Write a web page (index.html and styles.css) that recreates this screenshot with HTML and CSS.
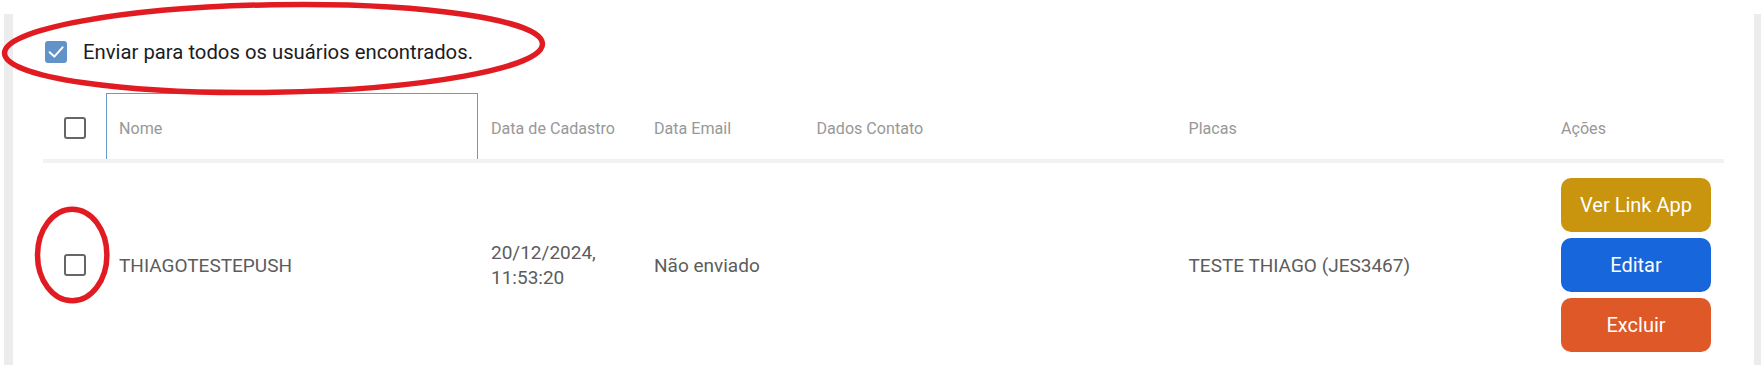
FILE: index.html
```html
<!DOCTYPE html>
<html lang="pt-BR">
<head>
<meta charset="utf-8">
<title>Usuários</title>
<link rel="stylesheet" href="styles.css">
</head>
<body>
<div class="frame">
  <label class="send-all">
    <span class="cb cb-checked"><svg viewBox="0 0 22 22"><path d="M4.6 11.3 L9.3 15.6 L17.6 6.3"/></svg></span>
    <span class="send-all-text">Enviar para todos os usuários encontrados.</span>
  </label>
  <div class="table">
    <div class="thead">
      <div class="th th-check"><span class="cb"></span></div>
      <div class="th th-nome">Nome</div>
      <div class="th">Data de Cadastro</div>
      <div class="th">Data Email</div>
      <div class="th">Dados Contato</div>
      <div class="th">Placas</div>
      <div class="th">Ações</div>
    </div>
    <div class="trow">
      <div class="td td-check"><span class="cb"></span></div>
      <div class="td">THIAGOTESTEPUSH</div>
      <div class="td">20/12/2024,<br>11:53:20</div>
      <div class="td">Não enviado</div>
      <div class="td"></div>
      <div class="td">TESTE THIAGO (JES3467)</div>
      <div class="td td-acoes">
        <button class="btn btn-link">Ver Link App</button>
        <button class="btn btn-edit">Editar</button>
        <button class="btn btn-del">Excluir</button>
      </div>
    </div>
  </div>
</div>
<svg class="marks" viewBox="0 0 1761 365" width="1761" height="365">
  <ellipse cx="273.5" cy="48.5" rx="269" ry="43.8" transform="rotate(-1 273.5 48.5)"/>
  <ellipse cx="72.2" cy="255" rx="34.7" ry="45.8"/>
</svg>
</body>
</html>
```

FILE: styles.css
```css
html, body {
  margin: 0;
  padding: 0;
  background: #ffffff;
}

body {
  position: relative;
  font-family: Roboto, "Liberation Sans", sans-serif;
  overflow: hidden;
}

.frame {
  margin: 14px 0 0 4px;
  border-left: 9px solid #ececec;
  border-right: 7px solid #ececec;
  padding: 27px 30px 20px 30px;
  min-height: 400px;
}

.send-all {
  display: flex;
  align-items: center;
  gap: 16px;
  height: 22px;
  padding-left: 2px;
}

.send-all-text {
  font-size: 20.3px;
  color: #1c1c22;
  white-space: nowrap;
}

.cb {
  display: block;
  width: 22px;
  height: 22px;
  box-sizing: border-box;
  border: 2.5px solid #666666;
  border-radius: 3px;
  background: #ffffff;
  flex: none;
}

.cb-checked {
  border: none;
  background: #6192c8;
}

.cb-checked svg {
  display: block;
  width: 22px;
  height: 22px;
}

.cb-checked path {
  fill: none;
  stroke: #ffffff;
  stroke-width: 2;
  stroke-linecap: round;
  stroke-linejoin: round;
}

.thead,
.trow {
  display: grid;
  grid-template-columns: 63px 372px 163px 162.5px 372px 372.5px 176px;
}

.thead {
  margin-top: 30px;
  height: 66px;
  border-bottom: 4px solid #f2f2f2;
}

.th {
  display: flex;
  align-items: center;
  padding: 4px 0 0 13px;
  font-size: 16.1px;
  color: #989898;
  white-space: nowrap;
}

.th-nome {
  border: 1px solid #6b98cc;
  border-bottom: none;
  padding-left: 12px;
}

.trow {
  padding: 15px 0;
}

.td {
  display: flex;
  align-items: center;
  padding-left: 13px;
  font-size: 19px;
  line-height: 25px;
  color: #5c5c5c;
}

.th-check,
.td-check {
  justify-content: center;
  padding-left: 0;
}

.td-acoes {
  flex-direction: column;
  align-items: flex-start;
  gap: 6px;
}

.btn {
  width: 150px;
  height: 54px;
  border: none;
  border-radius: 10px;
  color: #ffffff;
  font-family: Roboto, "Liberation Sans", sans-serif;
  font-size: 20px;
  padding: 0;
}

.btn-link { background: #c9940e; }
.btn-edit { background: #1866dc; }
.btn-del { background: #de5828; }

.marks {
  position: absolute;
  left: 0;
  top: 0;
  pointer-events: none;
}

.marks ellipse {
  fill: none;
  stroke: #e11b22;
  stroke-width: 5.5;
}
```
